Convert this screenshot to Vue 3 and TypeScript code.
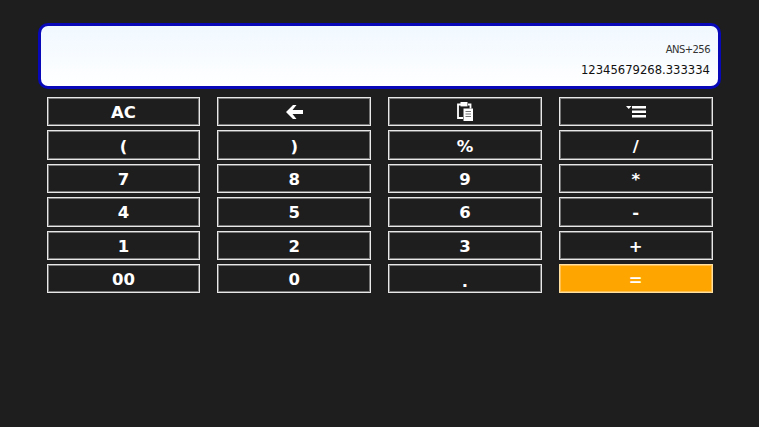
<script setup lang="ts">
const keys: { label: string; icon?: string; cls?: string }[] = [
  { label: 'AC' }, { label: '', icon: 'back' }, { label: '', icon: 'paste' }, { label: '', icon: 'menu' },
  { label: '(' }, { label: ')' }, { label: '%' }, { label: '/' },
  { label: '7' }, { label: '8' }, { label: '9' }, { label: '*' },
  { label: '4' }, { label: '5' }, { label: '6' }, { label: '-' },
  { label: '1' }, { label: '2' }, { label: '3' }, { label: '+' },
  { label: '00' }, { label: '0' }, { label: '.', cls: 'dot' }, { label: '=', cls: 'eq' },
]
</script>

<template>
  <div class="page">
    <div class="display">
      <div class="expr">ANS+256</div>
      <div class="value">12345679268.333334</div>
    </div>
    <div class="pad">
      <button v-for="(k, i) in keys" :key="i" class="key" :class="k.cls">
        <svg v-if="k.icon === 'back'" width="17" height="14" viewBox="0 0 17 14">
          <path d="M7 0 L0 7 L7 14 L10.5 14 L6.5 9 L17 9 L17 5 L6.5 5 L10.5 0 Z" fill="#fff" />
        </svg>
        <svg v-else-if="k.icon === 'paste'" width="16" height="19" viewBox="0 0 16 19">
          <path d="M4 2.5 H1 V16 H6 M11 2.5 H13.5 V6.5" fill="none" stroke="#fff" stroke-width="1.8" />
          <rect x="3.5" y="0" width="7" height="4.4" fill="#fff" />
          <rect x="6.5" y="6.5" width="9.5" height="12.5" fill="#fff" />
          <path d="M8.5 9.5 H14 M8.5 12 H14 M8.5 14.5 H14" stroke="#777" stroke-width="1" />
        </svg>
        <svg v-else-if="k.icon === 'menu'" width="20" height="12" viewBox="0 0 20 12">
          <path d="M0 0 H5.5 L2.75 3 Z" fill="#fff" />
          <path d="M6 1.2 H20 M6 5.7 H20 M6 10.2 H20" stroke="#fff" stroke-width="2.6" />
        </svg>
        <span v-else>{{ k.label }}</span>
      </button>
    </div>
  </div>
</template>

<style>
html, body { margin: 0; background: #1e1e1e; }
</style>

<style scoped>
.page {
  width: 759px;
  height: 427px;
  box-sizing: border-box;
  padding: 23px 38px 0;
  background: #1e1e1e;
  font-family: "DejaVu Sans", sans-serif;
}
.display {
  height: 66px;
  box-sizing: border-box;
  border: 3px solid #0808b8;
  border-radius: 10px;
  background: linear-gradient(#f0f8ff, #ffffff);
  display: flex;
  flex-direction: column;
  align-items: flex-end;
  justify-content: flex-end;
  padding: 0 8px 8.5px 0;
  color: #111;
}
.expr { font-size: 10px; letter-spacing: -0.55px; line-height: 12px; margin-bottom: 7px; color: #333; }
.value { font-size: 11.6px; line-height: 15px; }
.pad {
  margin: 8px 8.45px 0 8.7px;
  display: grid;
  grid-template-columns: repeat(4, 1fr);
  grid-auto-rows: 29.4px;
  column-gap: 17px;
  row-gap: 4px;
}
.key {
  margin: 0;
  padding: 0;
  box-sizing: border-box;
  border: 1px solid #e8e8e8;
  box-shadow: inset 0 0 0 1px #777;
  background: #1e1e1e;
  color: #fff;
  font-family: inherit;
  font-weight: 700;
  font-size: 16.5px;
  display: flex;
  align-items: center;
  justify-content: center;
}
.key span { position: relative; top: 1px; }
.dot span { top: 3px; }
.eq { background: #ffa500; border-color: #ffe0a0; box-shadow: inset 0 0 0 1px #ffc050; }
</style>
